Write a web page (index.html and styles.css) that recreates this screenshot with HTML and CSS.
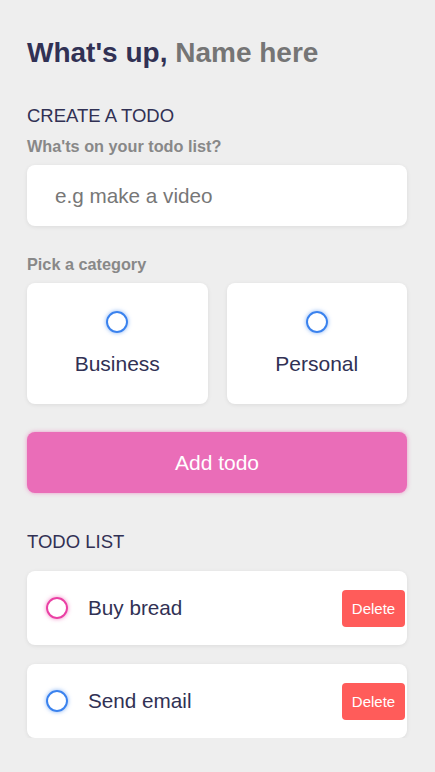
FILE: index.html
```html
<!DOCTYPE html>
<html lang="en">
<head>
<meta charset="utf-8">
<title>Todo</title>
<link rel="stylesheet" href="styles.css">
</head>
<body>
<main class="app">
  <section class="greeting">
    <h2 class="title">What's up, <span class="name">Name here</span></h2>
  </section>

  <section class="create">
    <h3 class="section-title">CREATE A TODO</h3>
    <h4 class="label">Wha'ts on your todo list?</h4>
    <div class="field">e.g make a video</div>

    <h4 class="label label-cat">Pick a category</h4>
    <div class="options">
      <div class="option">
        <span class="bubble business"></span>
        <span class="option-text">Business</span>
      </div>
      <div class="option">
        <span class="bubble business"></span>
        <span class="option-text">Personal</span>
      </div>
    </div>

    <button class="submit">Add todo</button>
  </section>

  <section class="list">
    <h3 class="section-title">TODO LIST</h3>
    <div class="items">
      <div class="item">
        <span class="bubble personal"></span>
        <span class="item-text">Buy bread</span>
        <button class="delete">Delete</button>
      </div>
      <div class="item">
        <span class="bubble business"></span>
        <span class="item-text">Send email</span>
        <button class="delete">Delete</button>
      </div>
    </div>
  </section>
</main>
</body>
</html>
```

FILE: styles.css
```css
* {
  box-sizing: border-box;
  margin: 0;
  padding: 0;
}

body {
  background: #eeeeee;
  color: #313154;
  font-family: "Liberation Sans", Arial, sans-serif;
}

.app {
  padding: 37px 28px 0 27px;
}

.title {
  font-size: 28px;
  font-weight: 700;
  line-height: 31px;
  color: #313154;
}

.name {
  color: #757575;
}

.create {
  margin-top: 37px;
}

.section-title {
  font-size: 18.5px;
  font-weight: 400;
  line-height: 21px;
  color: #313154;
}

.label {
  margin-top: 11px;
  font-size: 16.25px;
  font-weight: 700;
  line-height: 18px;
  color: #888888;
}

.field {
  margin-top: 10px;
  height: 61px;
  display: flex;
  align-items: center;
  padding: 0 28px;
  background: #ffffff;
  border-radius: 8px;
  box-shadow: 0 1px 4px rgba(0, 0, 0, 0.08);
  font-size: 20.7px;
  color: #777777;
}

.label-cat {
  margin-top: 29px;
}

.options {
  margin-top: 10px;
  display: grid;
  grid-template-columns: 1fr 1fr;
  gap: 19px;
}

.option {
  height: 121px;
  background: #ffffff;
  border-radius: 8px;
  box-shadow: 0 1px 4px rgba(0, 0, 0, 0.08);
  display: flex;
  flex-direction: column;
  align-items: center;
  padding-top: 28px;
  gap: 19px;
}

.option-text {
  font-size: 21px;
  line-height: 24px;
  color: #313154;
}

.bubble {
  display: block;
  width: 22px;
  height: 22px;
  flex: none;
  border-radius: 50%;
  border: 2px solid #3a82ee;
  box-shadow: 0 0 4px rgba(58, 130, 238, 0.6);
}

.bubble.personal {
  border-color: #ea40a4;
  box-shadow: 0 0 4px rgba(234, 64, 164, 0.6);
}

.submit {
  display: block;
  width: 100%;
  margin-top: 28px;
  height: 61px;
  border: none;
  border-radius: 8px;
  background: #ea6db8;
  box-shadow: 0 0 4px rgba(234, 64, 164, 0.5);
  color: #ffffff;
  font-family: "Liberation Sans", Arial, sans-serif;
  font-size: 21px;
  font-weight: 400;
}

.list {
  margin-top: 38px;
}

.items {
  margin-top: 19px;
  display: flex;
  flex-direction: column;
  gap: 19px;
}

.item {
  height: 74px;
  background: #ffffff;
  border-radius: 8px;
  box-shadow: 0 1px 4px rgba(0, 0, 0, 0.08);
  display: flex;
  align-items: center;
  padding: 0 2px 0 19px;
}

.item-text {
  flex: 1;
  margin-left: 20px;
  font-size: 20.7px;
  color: #313154;
}

.delete {
  width: 63px;
  height: 37px;
  border: none;
  border-radius: 4px;
  background: #ff5c5a;
  color: #ffffff;
  font-family: "Liberation Sans", Arial, sans-serif;
  font-size: 15px;
}
```
